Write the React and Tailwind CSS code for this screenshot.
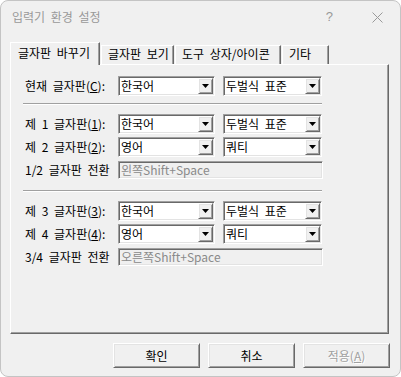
const sunken =
  "border border-t-[#a0a0a0] border-l-[#a0a0a0] border-r-white border-b-white shadow-[inset_1px_1px_0_#696969,inset_-1px_-1px_0_#e3e3e3]";
const raised =
  "border border-t-white border-l-white border-r-[#696969] border-b-[#696969] shadow-[inset_1px_1px_0_#e3e3e3,inset_-1px_-1px_0_#a0a0a0]";

const Arrow = () => (
  <svg width="7" height="4" viewBox="0 0 7 4">
    <path d="M0 0h7L3.5 4z" fill="#000" />
  </svg>
);

function Combo({ value, width }) {
  return (
    <div className={`h-[20px] ${width} flex p-[1px] bg-white ${sunken}`}>
      <div className="flex-1 pl-[1px] leading-[16px] text-black">{value}</div>
      <div
        className={`w-[15px] h-[16px] bg-[#f0f0f0] flex items-center justify-center ${raised}`}
      >
        <Arrow />
      </div>
    </div>
  );
}

function Label({ children }) {
  return <div className="w-[93px] shrink-0 whitespace-nowrap">{children}</div>;
}

function ComboRow({ label, first, second }) {
  return (
    <div className="h-[23px] flex items-center">
      <Label>{label}</Label>
      <Combo value={first} width="w-[97px]" />
      <div className="w-[8px]" />
      <Combo value={second} width="w-[99px]" />
    </div>
  );
}

function SwitchRow({ label, value }) {
  return (
    <div className="h-[23px] flex items-center">
      <Label>{label}</Label>
      <div
        className={`w-[205px] h-[18px] bg-[#f0f0f0] pl-[2px] leading-[16px] text-[#8a8a8a] ${sunken}`}
      >
        {value}
      </div>
    </div>
  );
}

const Separator = () => (
  <div className="ml-[-2px] w-[299px] h-[2px] border-t border-t-[#a0a0a0] border-b border-b-white" />
);

function Tab({ children, active, width }) {
  if (active) {
    return (
      <div
        className={`${width} h-[23px] -mb-[1px] relative z-10 bg-[#f0f0f0] flex pl-[7px] pt-[3px] border-t border-l border-white border-r border-r-[#696969] shadow-[inset_-1px_0_0_#a0a0a0]`}
      >
        {children}
      </div>
    );
  }
  return (
    <div
      className={`${width} ml-[1px] h-[19px] flex pl-[6px] pt-[1px] border-t border-l border-white border-r border-r-[#696969] shadow-[inset_-1px_0_0_#a0a0a0]`}
    >
      {children}
    </div>
  );
}

function Button({ children, disabled }) {
  return (
    <div
      className={`w-[87px] h-[25px] flex items-center justify-center ${raised} ${
        disabled ? "text-[#a0a0a0] [text-shadow:1px_1px_0_#ffffff]" : "text-black"
      }`}
    >
      {children}
    </div>
  );
}

export default function App() {
  return (
    <div className="w-[401px] h-[377px] bg-[#f0f0f0] border border-[#c4c4c4] rounded-[8px] overflow-hidden flex flex-col text-[12px] leading-[14px] text-black font-['Noto_Sans_CJK_KR',sans-serif] [word-spacing:3px]">
      {/* title bar */}
      <div className="h-[32px] flex items-center pl-[11px] pr-[17px] text-[#999999] shrink-0">
        <span>입력기 환경 설정</span>
        <span className="ml-auto mr-[39px] text-[13px] font-['Liberation_Sans',sans-serif]">?</span>
        <svg width="11" height="11" viewBox="0 0 11 11">
          <path d="M0.5 0.5l10 10M10.5 0.5l-10 10" stroke="#9a9a9a" strokeWidth="1" />
        </svg>
      </div>

      {/* tabs */}
      <div className="mt-[9px] h-[22px] pl-[9px] flex items-end shrink-0">
        <Tab active width="w-[90px]">글자판 바꾸기</Tab>
        <Tab width="w-[73px]">글자판 보기</Tab>
        <Tab width="w-[106px]">도구 상자/아이콘</Tab>
        <Tab width="w-[47px]">기타</Tab>
      </div>

      {/* panel */}
      <div className="ml-[9px] w-[379px] h-[270px] shrink-0 border-t border-l border-white border-r border-b border-r-[#696969] border-b-[#696969] shadow-[inset_-1px_-1px_0_#a0a0a0] pt-[9px] pl-[14px]">
        <ComboRow
          label={<>현재 글자판(<span className="underline">C</span>):</>}
          first="한국어"
          second="두벌식 표준"
        />
        <div className="mt-[6px] mb-[7px]">
          <Separator />
        </div>
        <ComboRow
          label={<>제 1 글자판(<span className="underline">1</span>):</>}
          first="한국어"
          second="두벌식 표준"
        />
        <ComboRow
          label={<>제 2 글자판(<span className="underline">2</span>):</>}
          first="영어"
          second="쿼티"
        />
        <SwitchRow label="1/2 글자판 전환" value="왼쪽Shift+Space" />
        <div className="mt-[9px] mb-[7px]">
          <Separator />
        </div>
        <ComboRow
          label={<>제 3 글자판(<span className="underline">3</span>):</>}
          first="한국어"
          second="두벌식 표준"
        />
        <ComboRow
          label={<>제 4 글자판(<span className="underline">4</span>):</>}
          first="영어"
          second="쿼티"
        />
        <SwitchRow label="3/4 글자판 전환" value="오른쪽Shift+Space" />
      </div>

      {/* buttons */}
      <div className="mt-[9px] flex justify-end gap-[8px] pr-[10px]">
        <Button>확인</Button>
        <Button>취소</Button>
        <Button disabled>
          적용(<span className="underline">A</span>)
        </Button>
      </div>
    </div>
  );
}
